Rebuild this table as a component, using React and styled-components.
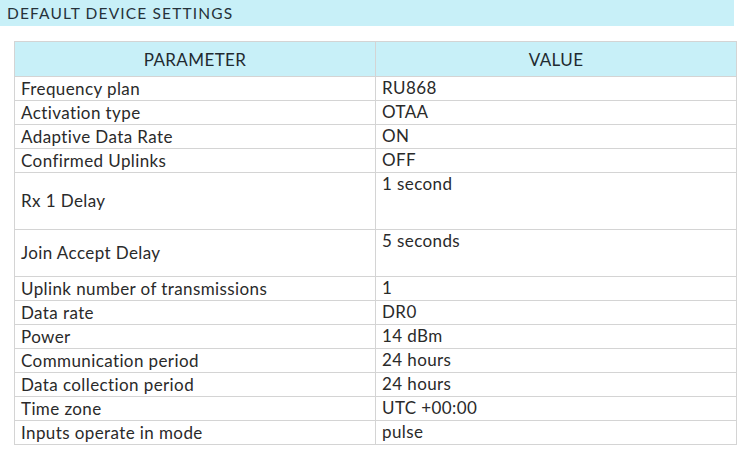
import React from "react";
import styled, { createGlobalStyle } from "styled-components";

const Global = createGlobalStyle`
  html, body { margin: 0; padding: 0; background: #ffffff; }
  body { font-family: "Lato", "Open Sans", sans-serif; color: #2a2a2a; }
`;

const Page = styled.div`
  width: 746px;
  height: 449px;
  overflow: hidden;
  display: flex;
  flex-direction: column;
`;

const TitleBar = styled.div`
  width: 734px;
  height: 26px;
  background: #c8f0f8;
  display: flex;
  align-items: center;
  padding-left: 7px;
  box-sizing: border-box;
  font-size: 15.5px;
  letter-spacing: 1.15px;
  text-transform: uppercase;
  color: #26323a;
`;

const Table = styled.table`
  margin: 15px 0 0 14px;
  width: 723px;
  border-collapse: collapse;
  table-layout: fixed;
  font-size: 17px;
  font-weight: 400;
  letter-spacing: 0.4px;
`;

const HeadCell = styled.th`
  height: 34px;
  padding: 0;
  background: #c8f0f8;
  border: 1px solid #d4d4d4;
  font-weight: 400;
  text-align: center;
  vertical-align: middle;
  color: #1f2a30;
`;

const Cell = styled.td`
  height: ${(p) => p.$h - 1}px;
  padding: 0 0 0 6px;
  border: 1px solid #d4d4d4;
  line-height: 22px;
  vertical-align: ${(p) => (p.$top ? "top" : "middle")};
  white-space: nowrap;
  overflow: hidden;
`;

const rows = [
  ["Frequency plan", "RU868", 24],
  ["Activation type", "OTAA", 24],
  ["Adaptive Data Rate", "ON", 24],
  ["Confirmed Uplinks", "OFF", 24],
  ["Rx 1 Delay", "1 second", 57],
  ["Join Accept Delay", "5 seconds", 47],
  ["Uplink number of transmissions", "1", 24],
  ["Data rate", "DR0", 24],
  ["Power", "14 dBm", 24],
  ["Communication period", "24 hours", 24],
  ["Data collection period", "24 hours", 24],
  ["Time zone", "UTC +00:00", 24],
  ["Inputs operate in mode", "pulse", 24],
];

export default function App() {
  return (
    <Page>
      <Global />
      <TitleBar>Default device settings</TitleBar>
      <Table>
        <colgroup>
          <col style={{ width: "361px" }} />
          <col />
        </colgroup>
        <thead>
          <tr>
            <HeadCell>PARAMETER</HeadCell>
            <HeadCell>VALUE</HeadCell>
          </tr>
        </thead>
        <tbody>
          {rows.map(([p, v, h]) => (
            <tr key={p}>
              <Cell $h={h}>{p}</Cell>
              <Cell $h={h} $top>{v}</Cell>
            </tr>
          ))}
        </tbody>
      </Table>
    </Page>
  );
}
